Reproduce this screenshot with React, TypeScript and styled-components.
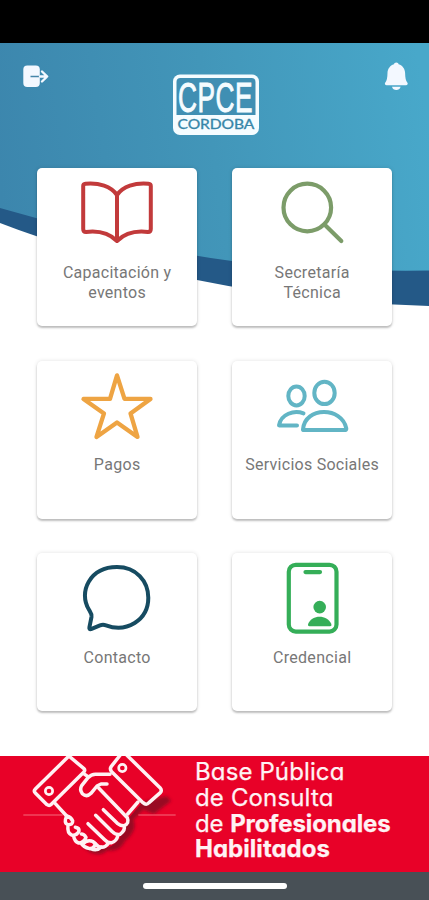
import React from 'react';
import styled, { createGlobalStyle } from 'styled-components';

const GlobalStyle = createGlobalStyle`
  * { box-sizing: border-box; }
  body { margin: 0; background: #fff; font-family: Roboto, sans-serif; }
  svg { display: block; }
`;

const Screen = styled.div`
  position: relative;
  display: flex;
  flex-direction: column;
  width: 429px;
  height: 900px;
  overflow: hidden;
  background: #fff;
`;

const StatusBar = styled.div`
  flex: 0 0 43.5px;
  background: #000;
`;

const Backdrop = styled.svg`
  position: absolute;
  top: 43px;
  left: 0;
`;

const Header = styled.header`
  position: relative;
  flex: 0 0 124.5px;
  display: flex;
  justify-content: space-between;
  align-items: flex-start;
  padding: 17.5px 19px 0 22px;
`;

const IconButton = styled.button`
  width: 28px;
  height: 30px;
  padding: 0;
  border: 0;
  background: none;
`;

const LogoSlot = styled.div`
  padding: 11.5px 0 0 0;
  margin-right: 1px;
`;

const Menu = styled.main`
  position: relative;
  flex: 0 0 588px;
  display: grid;
  grid-template-columns: 160px 160px;
  grid-auto-rows: 158px;
  gap: 34.6px 35px;
  padding-left: 37px;
`;

const Card = styled.a`
  display: flex;
  flex-direction: column;
  align-items: center;
  padding-top: 8px;
  border-radius: 5px;
  background: #fff;
  box-shadow: 0 2px 2px rgba(0, 0, 0, 0.22), 0 0 4px rgba(0, 0, 0, 0.12);
`;

const CardLabel = styled.span<{ $spacing: number }>`
  margin-top: 6.5px;
  padding-left: ${(p) => p.$spacing}px;
  color: #777;
  font-size: 16px;
  line-height: 20px;
  letter-spacing: ${(p) => p.$spacing}px;
  text-align: center;
  white-space: pre-line;
`;

const Banner = styled.section`
  flex: 0 0 116px;
  display: flex;
  overflow: hidden;
  background: #e80128;
`;

const BannerText = styled.p`
  display: flex;
  flex-direction: column;
  margin: 3px 0 0 -5px;
  color: #fff2f4;
  font-family: Inter, sans-serif;
  font-feature-settings: 'cv11', 'ss03';
  font-size: 24px;
  line-height: 25.8px;
  white-space: nowrap;
`;

const BannerLine = styled.span<{ $spacing: number }>`
  display: block;
  height: 25.8px;
  letter-spacing: ${(p) => p.$spacing}px;
  -webkit-text-stroke: 0.25px #fff2f4;
  b { font-weight: 700; }
`;

const NavBar = styled.nav`
  flex: 1;
  display: flex;
  justify-content: center;
  padding-top: 11px;
  background: #485056;
`;

const HomeHandle = styled.div`
  width: 144px;
  height: 6px;
  border-radius: 3px;
  background: #fff;
`;

const Waves = () => (
  <Backdrop width="429" height="265" viewBox="0 43 429 265">
    <defs>
      <linearGradient id="sky" gradientUnits="userSpaceOnUse" x1="0" y1="190" x2="429" y2="130">
        <stop offset="0" stopColor="#3c86ad" />
        <stop offset="0.5" stopColor="#4296b9" />
        <stop offset="1" stopColor="#48a8ca" />
      </linearGradient>
    </defs>
    <path d="M0 200V223Q18 230 36 236Q125 265 197 280Q310 303 429 306V200Z" fill="#245987" />
    <path d="M0 43H429V270.500Q393 271 360 270Q300 269 232 261Q140 249 36 218L0 208Z" fill="url(#sky)" />
  </Backdrop>
);

const ExitIcon = () => (
  <svg width="28" height="30" viewBox="22 61 28 30" fill="none">
    <rect x="23.300" y="65.500" width="16.500" height="21.500" rx="4" fill="#f3f8ff" />
    <path d="M30.500 76.500H40" stroke="#4686a9" strokeWidth="1.500" />
    <path d="M40 76.500H47M42 71.500L47.200 76.500L42 81.500" stroke="#f3f8ff" strokeWidth="2.400" strokeLinecap="round" strokeLinejoin="round" />
  </svg>
);

const BellIcon = () => (
  <svg width="28" height="30" viewBox="382 61 28 30" fill="#f3f8ff">
    <path d="M396.300 62.500C397.600 62.500 398.400 63.300 398.600 64.200C402.800 65.500 405 69 405.100 73C405.200 78 405.800 80.500 407.300 82.600C408.300 84 407.500 85.200 406 85.200H386.600C385.100 85.200 384.300 84 385.300 82.600C386.800 80.500 387.400 78 387.500 73C387.600 69 389.800 65.500 394 64.200C394.200 63.300 395 62.500 396.300 62.500Z" />
    <path d="M392 86.800H400.600C400 89 398.400 90 396.300 90S392.600 89 392 86.800Z" />
  </svg>
);

const Logo = () => (
  <svg width="88" height="64" viewBox="172 73 88 64">
    <rect x="173" y="74.500" width="86" height="60.500" rx="7" fill="#f5fcff" />
    <path d="M176.500 115V82Q176.500 78 180.500 78H251.500Q255.500 78 255.500 82V115Z" fill="#408fb3" />
    <text transform="translate(178 112.300) scale(.61 1)" fontFamily="Liberation Sans" fontSize="43" stroke="#f5fcff" strokeWidth="1" fill="#f5fcff" textLength="122">CPCE</text>
    <text transform="translate(177.500 128.600) scale(1.250 1)" fontFamily="Lato" fontSize="12.500" fontWeight="400" stroke="#3685a8" strokeWidth="0.300" fill="#3685a8" textLength="61.500">CORDOBA</text>
  </svg>
);

const Glyph = styled.svg.attrs({ width: 80, height: 80, fill: 'none', strokeLinecap: 'round', strokeLinejoin: 'round' })`
  flex: none;
`;

const BookIcon = () => (
  <Glyph viewBox="77 176 80 80" stroke="#c23a3b" strokeWidth="4">
    <path d="M117 195C111 186.500 99 182.500 85.500 183.800Q83.200 184 83.200 186V229Q83.200 232 86 232C98 230.500 109 233 117 241C125 233 136 230.500 148 232Q150.800 232 150.800 229V186Q150.800 184 148.500 183.800C135 182.500 123 186.500 117 195ZM117 195V240" />
  </Glyph>
);

const SearchIcon = () => (
  <Glyph viewBox="272 176 80 80" stroke="#7c9c69" strokeWidth="4.200">
    <circle cx="307.300" cy="207.500" r="23.800" />
    <path d="M325 225L341.300 241" />
  </Glyph>
);

const StarIcon = () => (
  <Glyph viewBox="77 368.600 80 80" stroke="#eea443" strokeWidth="4.300">
    <path d="M117 375L124.500 398.500H150.500L130.500 413L137.500 436.500L117 422L96.500 436.500L104 413L83.500 398.500H110Z" />
  </Glyph>
);

const PeopleIcon = () => (
  <Glyph viewBox="272 368.600 80 80" stroke="#62b5c5" strokeWidth="4">
    <ellipse cx="296.500" cy="395.500" rx="8.200" ry="9.500" />
    <ellipse cx="324.500" cy="392.500" rx="10.200" ry="11.200" />
    <path d="M303.500 413C294 409.500 281 413.500 279 425H297" />
    <path d="M303 429C305 406 342 406 346.300 428Q346.500 429.700 344.500 429.700H304Q303 429.700 303 429Z" />
  </Glyph>
);

const ChatIcon = () => (
  <Glyph viewBox="77 561.200 80 80" stroke="#164b61" strokeWidth="4">
    <path d="M91.500 617C92 614 90.500 612.500 89 610C78 592 90 567.200 117 567.200C136 567.200 148.300 581 148.300 598C148.300 621 126 633 106 625.500Q103 624.300 100 625.500L91 629.300Q89 629.800 89.400 627.500Z" />
  </Glyph>
);

const CredentialIcon = () => (
  <Glyph viewBox="272 561.200 80 80" stroke="#35ae58" strokeWidth="4.200">
    <rect x="288.800" y="565" width="47.700" height="66.800" rx="7" />
    <path d="M305.500 572.300H320" />
    <circle cx="319.700" cy="607.300" r="6.300" fill="#35ae58" stroke="none" />
    <path d="M309.500 626.500H330Q332 626.500 331.200 624C327 614.500 312 614.500 308.200 624Q307.500 626.500 309.500 626.500Z" fill="#35ae58" stroke="none" />
  </Glyph>
);

const HandshakeArt = () => (
  <svg width="200" height="116" viewBox="0 33 600 348" fill="none" strokeLinecap="round" strokeLinejoin="round">
    <defs>
      <filter id="soft" x="-20%" y="-20%" width="140%" height="140%">
        <feGaussianBlur stdDeviation="5" />
      </filter>
    </defs>
    <path d="M500 153L513 168L462 207L430 194L400 225Q414 255 375 288Q360 322 322 316Q303 336 270 322L242 300L390 180Z" fill="#850c21" opacity="0.8" filter="url(#soft)" />
    <path d="M174 176L200 227Q194 246 208 250L225 285L270 310Q292 318 310 307Q336 310 347 290Q362 284 362 270Q380 260 376 244Q388 235 386 220L422 178L330 75L262 89L246 87Z" fill="#e80128" />
    <path d="M70 210H188M415 210H527" stroke="#f56d7d" strokeWidth="3" strokeLinecap="butt" />
    <g stroke="#fff1f3" strokeWidth="10.500">
      <path d="M218 22L106 132Q100 138 106 144L141 179Q148 184 154 178L251 82Q257 76 251 70L210 36" />
      <path d="M361 30L334 64Q328 72 335 80L429 173Q439 182 447 173L481 143Q487 136 480 128L378 28" />
      <circle cx="147" cy="138" r="11" strokeWidth="8" />
      <circle cx="367" cy="69" r="11" strokeWidth="8" />
      <path d="M166 176L200 213M251 86L264 95M414 171L383 207" />
      <path d="M330 88H286Q274 88 264 98L245 122Q238 134 247 146Q260 158 273 145L291 123L303 117H321" />
      <path d="M296 129L382 218Q389 236 372 242Q362 243 352 235L310 194M372 242Q377 256 360 268Q347 271 337 260L287 211M354 270Q350 289 335 293Q324 294 314 284L264 236M326 294Q316 308 304 307Q294 306 286 296" />
      <path d="M200 213Q190 235 204 239Q219 240 218 228Q213 216 200 213M204 241Q201 265 215 270Q230 273 237 258Q238 249 226 247M221 273Q223 289 236 294Q251 293 258 277Q252 267 244 267M243 294Q250 306 269 311Q282 311 286 297Q280 287 268 287Q256 287 248 298M272 311Q291 319 304 306" />
    </g>
  </svg>
);

const items = [
  { label: 'Capacitación y\neventos', icon: BookIcon, spacing: 0.26 },
  { label: 'Secretaría\nTécnica', icon: SearchIcon, spacing: 0.3 },
  { label: 'Pagos', icon: StarIcon, spacing: 0.3 },
  { label: 'Servicios Sociales', icon: PeopleIcon, spacing: 0.26 },
  { label: 'Contacto', icon: ChatIcon, spacing: 0.3 },
  { label: 'Credencial', icon: CredentialIcon, spacing: 0.3 },
];

export default function App() {
  return (
    <>
      <GlobalStyle />
      <Screen>
        <Waves />
        <StatusBar />
        <Header>
          <IconButton aria-label="Salir"><ExitIcon /></IconButton>
          <LogoSlot><Logo /></LogoSlot>
          <IconButton aria-label="Notificaciones"><BellIcon /></IconButton>
        </Header>
        <Menu>
          {items.map(({ label, icon: Icon, spacing }) => (
            <Card key={label}>
              <Icon />
              <CardLabel $spacing={spacing}>{label}</CardLabel>
            </Card>
          ))}
        </Menu>
        <Banner>
          <HandshakeArt />
          <BannerText>
            <BannerLine $spacing={0.12}>Base Pública</BannerLine>
            <BannerLine $spacing={0.15}>de Consulta</BannerLine>
            <BannerLine $spacing={-0.1}>de <b>Profesionales</b></BannerLine>
            <BannerLine $spacing={0.03}><b>Habilitados</b></BannerLine>
          </BannerText>
        </Banner>
        <NavBar><HomeHandle /></NavBar>
      </Screen>
    </>
  );
}
